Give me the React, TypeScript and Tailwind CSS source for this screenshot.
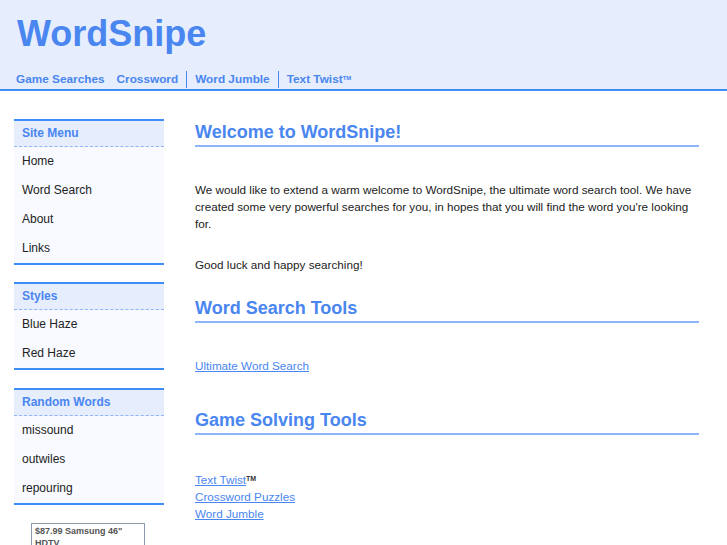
import React from "react";

const menus = [
  { title: "Site Menu", items: ["Home", "Word Search", "About", "Links"], gap: "mb-[17px]" },
  { title: "Styles", items: ["Blue Haze", "Red Haze"], gap: "mb-[18px]" },
  { title: "Random Words", items: ["missound", "outwiles", "repouring"], gap: "mb-[18px]" },
];

function SideBox({ title, items, gap }: { title: string; items: string[]; gap: string }) {
  return (
    <div className={`${gap} border-y-2 border-[#3d8ef5] bg-[#f8faff]`}>
      <div className="h-[26px] border-b border-dashed border-[#8fb4f7] bg-[#e6edfd] px-2 pt-[3px] text-[12px] font-bold text-[#4a86f0]">
        {title}
      </div>
      {items.map((item) => (
        <div key={item} className="flex h-[29px] items-center px-2 pb-[1px] text-[12px] text-[#222]">
          {item}
        </div>
      ))}
    </div>
  );
}

function Heading({ children }: { children: React.ReactNode }) {
  return (
    <h2 className="border-b-2 border-[#8fb4f7] pb-[2px] text-[18px] leading-[21px] font-bold text-[#4a86f0]">
      {children}
    </h2>
  );
}

export default function App() {
  return (
    <div className="min-h-[545px] bg-white font-['Liberation_Sans',Arial,sans-serif] text-[#222]">
      <div className="h-[91px] border-b-2 border-[#3d8ef5] bg-[#e6edfd] px-4 pt-[13px]">
        <div className="pl-[1px] text-[36px] leading-[42px] font-bold text-[#4a86f0]">WordSnipe</div>
        <div className="mt-[16px] flex items-center text-[11.8px] font-bold text-[#4a86f0]">
          <span className="pr-3">Game Searches</span>
          <span className="pr-[8px]">Crossword</span>
          <span className="border-l border-[#4a86f0] px-[8px] leading-[17px]">Word Jumble</span>
          <span className="border-l border-[#4a86f0] pl-[8px] leading-[17px]">
            Text Twist<sup className="text-[6px]">TM</sup>
          </span>
        </div>
      </div>

      <div className="flex pt-[28px]">
        <div className="ml-[14px] w-[150px] shrink-0">
          {menus.map((m) => (
            <SideBox key={m.title} title={m.title} items={m.items} gap={m.gap} />
          ))}
          <div className="ml-[17px] w-[114px] border border-[#8a9ab0] px-[3px] pt-[1px] text-[9px] leading-[12px] font-bold text-[#555]">
            $87.99 Samsung 46" HDTV
          </div>
        </div>

        <div className="ml-[31px] w-[504px] pt-[3px]">
          <Heading>Welcome to WordSnipe!</Heading>
          <p className="mt-[34px] text-[11.7px] leading-[17px]">
            We would like to extend a warm welcome to WordSnipe, the ultimate word search tool. We have created some very powerful searches for you, in hopes that you will find the word you're looking for.
          </p>
          <p className="mt-[24px] text-[11.7px] leading-[17px]">Good luck and happy searching!</p>

          <div className="mt-[25px]">
            <Heading>Word Search Tools</Heading>
          </div>
          <div className="mt-[34px] text-[11.7px] leading-[17px]">
            <a className="text-[#4a86f0] underline">Ultimate Word Search</a>
          </div>

          <div className="mt-[36px]">
            <Heading>Game Solving Tools</Heading>
          </div>
          <div className="mt-[36px] flex flex-col text-[11.7px] leading-[17px]">
            <span>
              <a className="text-[#4a86f0] underline">Text Twist</a>
              <sup className="text-[7px] font-bold text-[#333]">TM</sup>
            </span>
            <a className="text-[#4a86f0] underline">Crossword Puzzles</a>
            <a className="text-[#4a86f0] underline">Word Jumble</a>
          </div>
        </div>
      </div>
    </div>
  );
}
